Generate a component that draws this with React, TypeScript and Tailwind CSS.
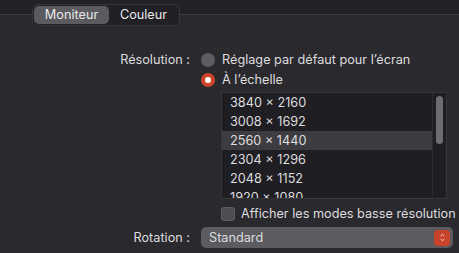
import { ChevronUp, ChevronDown } from 'lucide-react'

const resolutions = [
  '3840 × 2160',
  '3008 × 1692',
  '2560 × 1440',
  '2304 × 1296',
  '2048 × 1152',
  '1920 × 1080',
]

export default function App() {
  return (
    <div
      className="w-[459px] h-[253px] overflow-hidden bg-[#2a292e] text-[12.7px] text-[#dddcdf]"
      style={{ fontFamily: 'Inter, "Liberation Sans", Arial, sans-serif' }}
    >
      {/* top band + tabs */}
      <div className="h-[15px] bg-[#222126] border-b border-[#3c3b40]" />
      <div className="-mt-[11px] ml-[32px] w-[148px] h-[22px] flex items-center p-[1px] rounded-[6px] bg-[#212025] border border-[#38373c]">
        <div className="w-[75px] h-full flex items-center justify-center rounded-[5px] bg-[#5b5a5f] text-[#e8e8ea]">
          Moniteur
        </div>
        <div className="flex-1 h-full flex items-center justify-center text-[#e8e8ea]">Couleur</div>
      </div>

      <div className="mt-[27px] grid grid-cols-[190px_1fr] gap-x-[11px]">
        <div className="h-[14px] flex items-center justify-end">Résolution :</div>
        <div className="h-[14px] flex items-center gap-[7px]">
          <span className="w-[14px] h-[14px] rounded-full bg-[#5d5c61]" />
          <span>Réglage par défaut pour l’écran</span>
        </div>

        <div />
        <div className="mt-[6px] h-[14px] flex items-center gap-[7px]">
          <span className="w-[14px] h-[14px] rounded-full bg-[#cf442b] flex items-center justify-center">
            <span className="w-[6px] h-[6px] rounded-full bg-white" />
          </span>
          <span>À l’échelle</span>
        </div>

        <div />
        <div className="mt-[5px] ml-[20px] w-[226px] h-[107px] flex bg-[#1f1e23] border border-[#37363b] overflow-hidden">
          <div className="flex-1">
            {resolutions.map((r) => (
              <div
                key={r}
                className={`h-[19px] flex items-center pl-[8px] ${r === '2560 × 1440' ? 'bg-[#3d3c41]' : ''}`}
              >
                {r}
              </div>
            ))}
          </div>
          <div className="w-[14px] border-l border-[#2e2d32] flex justify-center pt-[3px]">
            <div className="w-[7px] h-[48px] rounded-full bg-[#6d6c71]" />
          </div>
        </div>

        <div />
        <div className="mt-[7px] ml-[20px] h-[15px] flex items-center gap-[6px]">
          <span className="w-[14px] h-[14px] shrink-0 rounded-[3px] bg-[#4e4d52] border border-[#5e5d62]" />
          <span className="whitespace-nowrap">Afficher les modes basse résolution</span>
        </div>

        <div className="mt-[6px] h-[21px] flex items-center justify-end">Rotation :</div>
        <div className="mt-[6px] w-[252px] h-[21px] flex items-center justify-between rounded-[5px] bg-[#5c5b60] pl-[8px] pr-[3px]">
          <span>Standard</span>
          <span className="w-[16px] h-[16px] rounded-[4px] bg-[#c9432b] flex flex-col items-center justify-center text-white">
            <ChevronUp className="w-[9px] h-[6px] -mb-[1px]" strokeWidth={3} />
            <ChevronDown className="w-[9px] h-[6px]" strokeWidth={3} />
          </span>
        </div>
      </div>
    </div>
  )
}
